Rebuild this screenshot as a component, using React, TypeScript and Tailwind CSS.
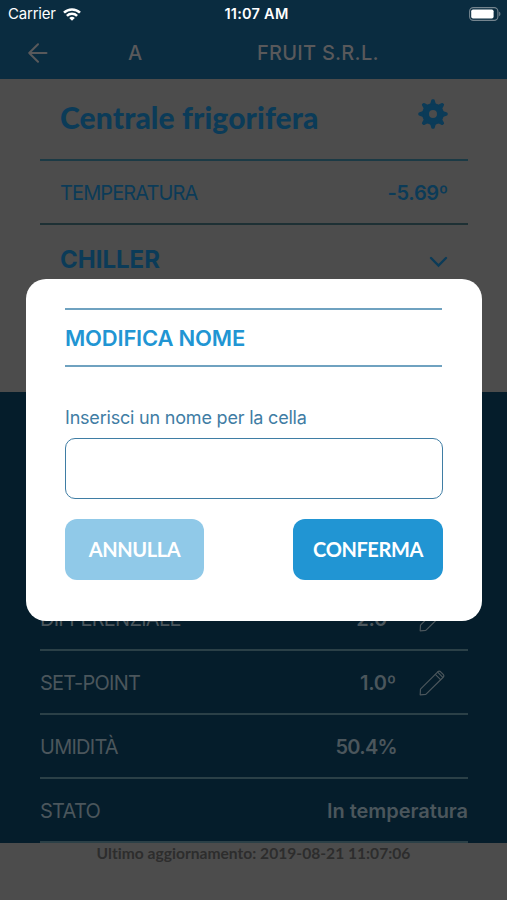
import React, { useState } from 'react';

type Row = { label: string, value: string, editable?: boolean, valueClass: string };

const rows: Row[] = [
    { label: 'DIFFERENZIALE', value: '2.0°', editable: true, valueClass: 'mr-[23px] tracking-[-0.2px]' },
    { label: 'SET-POINT', value: '1.0º', editable: true, valueClass: 'mr-[23px] tracking-[-0.2px]' },
    { label: 'UMIDITÀ', value: '50.4%', valueClass: 'mr-[71px] tracking-[-0.7px]' },
    { label: 'STATO', value: 'In temperatura', valueClass: 'tracking-[-0.05px]' },
];

const WifiIcon = () => (
    <svg width="18" height="13" viewBox="0 0 18 13" fill="none" stroke="white" strokeWidth="2.5">
        <path d="M1 4.7a11.3 11.3 0 0 1 16 0" />
        <path d="M3.9 7.9a7.2 7.2 0 0 1 10.2 0" />
        <path d="M9 12.8L6.2 10a4 4 0 0 1 5.6 0z" fill="white" stroke="none" />
    </svg>
);

const BatteryIcon = () => (
    <svg width="32" height="14" viewBox="0 0 32 14" fill="none">
        <rect x="0.6" y="0.6" width="28.3" height="12.8" rx="3.8" stroke="#75858f" strokeWidth="1.1" />
        <rect x="2.2" y="2.4" width="22.4" height="9.2" rx="1.8" fill="white" />
        <path d="M30.2 4.8c1.6.5 1.6 3.9 0 4.4z" fill="#75858f" />
    </svg>
);

const BackIcon = () => (
    <svg width="20" height="20" viewBox="0 0 20 20" fill="none" stroke="#59595b" strokeWidth="2" strokeLinecap="round" strokeLinejoin="round">
        <path d="M18.5 10H1.2M10 1.2L1.2 10l8.8 8.8" />
    </svg>
);

const GearIcon = () => (
    <svg width="30" height="30" viewBox="-15 -15 30 30" fill="#0b3b58">
        <path fillRule="evenodd" d="M0-10.8a10.8 10.8 0 1 0 0 21.6a10.8 10.8 0 1 0 0-21.6zM0-4a4 4 0 1 1 0 8a4 4 0 1 1 0-8z" />
        {[0, 45, 90, 135, 180, 225, 270, 315].map(a => (
            <path key={a} transform={`rotate(${a})`} d="M-2.9-9.8L-1.8-13.4Q-1.5-14.7-.6-14.7H.6Q1.5-14.7 1.8-13.4L2.9-9.8z" />
        ))}
    </svg>
);

const PencilIcon = () => (
    <svg width="26" height="26" viewBox="0 0 26 26" fill="none" stroke="#4b565c" strokeWidth="1.2" strokeLinejoin="round" strokeLinecap="round">
        <path d="M1.2 24.8L1.5 19.2L18.8 1.8Q20.2 .5 21.6 1.8L24.2 4.4Q25.5 5.8 24.2 7.2L6.8 24.4z" />
        <path d="M16.3 4.4L21.6 9.7M18.6 2.2L23.8 7.4" />
    </svg>
);

const App = () => {
    const [name, setName] = useState('');

    return (
        <div className="relative h-[900px] w-[507px] overflow-hidden bg-[#4c4c4c] font-['Inter',sans-serif]">
            {/* Header */}
            <header className="h-[79px] bg-[#0a2c40]">
                <div className="grid h-7 grid-cols-3 items-center pr-[6px] pl-2 text-white">
                    <div className="flex items-center gap-[7px]">
                        <span className="text-[15px] tracking-[-0.2px]">Carrier</span>
                        <WifiIcon />
                    </div>
                    <span className="pl-1 text-center text-[14.5px] font-semibold tracking-[0.25px] whitespace-nowrap">11:07 AM</span>
                    <div className="flex justify-end"><BatteryIcon /></div>
                </div>
                <div className="flex h-12 items-center pt-px pl-7 text-[20px] font-medium text-[#59595b]">
                    <BackIcon />
                    <span className="ml-[80px] w-[129px]">A</span>
                    <span className="tracking-[0.25px] whitespace-nowrap">FRUIT S.R.L.</span>
                </div>
            </header>

            {/* Plant summary */}
            <section className="h-[313px] pr-[39px] pl-10 text-[#0b3b58]">
                <div className="flex h-[82px] items-center justify-between border-b-2 border-[#1b3a45] pr-5 pl-5">
                    <h1 className="mb-[3px] font-['Lato'] text-[30px] font-black tracking-[0.12px] whitespace-nowrap">Centrale frigorifera</h1>
                    <span className="mb-[11px]"><GearIcon /></span>
                </div>
                <div className="flex h-16 items-center justify-between border-b-2 border-[#1d3034] px-5 pt-[2px] text-[20px]">
                    <span className="tracking-[-0.9px]">TEMPERATURA</span>
                    <span className="font-semibold tracking-[-0.3px]">-5.69º</span>
                </div>
                <div className="flex h-[70px] items-center justify-between px-5">
                    <h2 className="text-[24px] font-bold">CHILLER</h2>
                    <svg className="mt-1" width="19" height="12" viewBox="0 0 19 12" fill="none" stroke="currentColor" strokeWidth="2.4" strokeLinecap="round">
                        <path d="M2 2l7.5 7.5L17 2" />
                    </svg>
                </div>
            </section>

            {/* Cell details */}
            <section className="flex h-[451px] flex-col justify-end bg-[#051d2b] pr-[39px] pl-10 text-[20px] text-[#4b565c]">
                {rows.map(row => (
                    <div key={row.label} className="flex h-16 items-center border-b-2 border-[#2b4047] pt-px">
                        <span className="tracking-[-0.75px]">{row.label}</span>
                        <span className={`ml-auto font-semibold ${row.valueClass}`}>{row.value}</span>
                        {row.editable && <span className="mr-[23px]"><PencilIcon /></span>}
                    </div>
                ))}
            </section>

            <footer className="-mt-px text-center font-['Lato'] text-[15.6px] leading-[22px] font-bold tracking-[0.01px] text-[#2d2d2d] [font-variant-ligatures:none]">
                Ultimo aggiornamento: 2019-08-21 11:07:06
            </footer>

            {/* Rename modal */}
            <div className="absolute top-[279px] left-[26px] h-[342px] w-[456px] rounded-[20px] bg-white px-[39px] pt-[29px]">
                <h3 className="flex h-[59px] w-[377px] items-center border-y-2 border-[#6fa2c0] pt-[2px] text-[22px] font-semibold tracking-[-0.2px] text-[#2195d3]">MODIFICA NOME</h3>
                <label htmlFor="name" className="mt-[38px] block text-[18px] leading-[26px] tracking-[-0.2px] text-[#3f7da4]">Inserisci un nome per la cella</label>
                <input id="name" value={name} onChange={e => setName(e.target.value)} className="mt-[7px] block h-[61px] w-[378px] rounded-[10px] border-[1.5px] border-[#3f7da4] px-3 text-[18px] outline-none" />
                <div className="mt-5 flex w-[378px] justify-between font-['Lato'] text-[20px] font-bold tracking-[-0.4px] text-white">
                    <button className="h-[61px] w-[139px] rounded-xl bg-[#90c9e8] pb-[2px]">ANNULLA</button>
                    <button className="h-[61px] w-[150px] rounded-xl bg-[#2195d3] pb-[2px]">CONFERMA</button>
                </div>
            </div>
        </div>
    );
};

export default App;
